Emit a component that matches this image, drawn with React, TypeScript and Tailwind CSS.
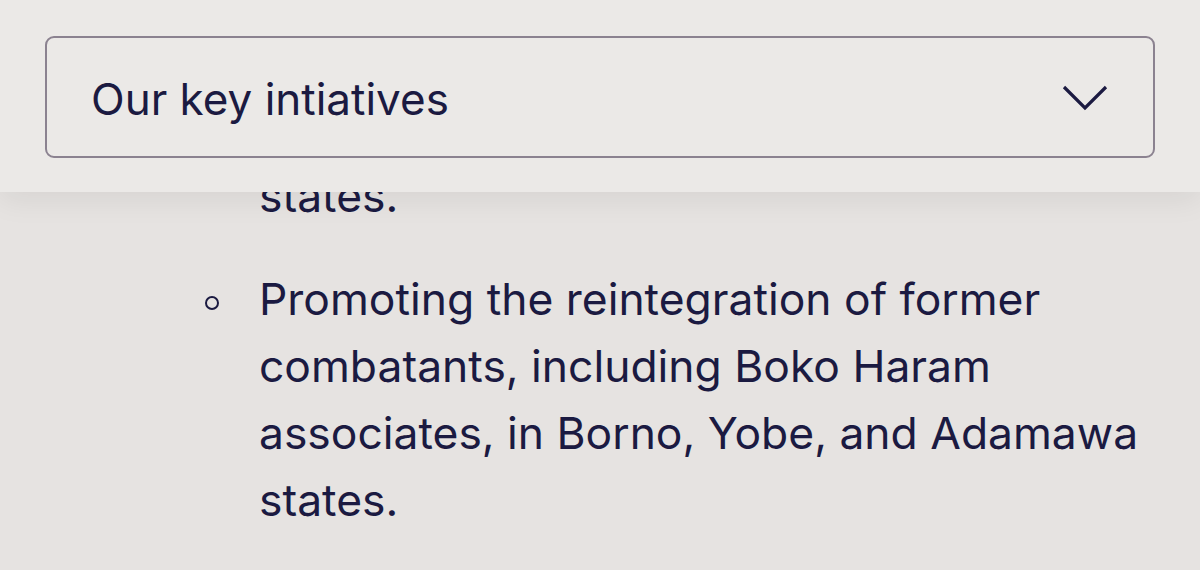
const items = [
  <>Supporting peacebuilding and reconciliation efforts in Borno, Yobe, and Adamawa<br />states.</>,
  <>Promoting the reintegration of former combatants, including Boko Haram associates, in Borno, Yobe, and Adamawa states.</>,
];

export default function App() {
  return (
    <div className="relative h-[570px] w-[1200px] overflow-hidden bg-[#e6e3e1] font-['Inter',sans-serif] text-[#1b1a41]">
      {/* sticky dropdown bar */}
      <div className="absolute inset-x-0 top-0 z-10 h-[192px] bg-[#ebe9e7] px-[45px] pt-[36px] shadow-[0_8px_28px_rgba(0,0,0,0.07)]">
        <button className="flex h-[122px] w-full items-center justify-between rounded-[9px] border-2 border-[#8b8290] pl-[44px] pr-[45px] text-left">
          <span className="pt-[4px] text-[44px] leading-none">Our key intiatives</span>
          <svg width="46" height="27" viewBox="0 0 46 27" fill="none" className="mt-[2px]">
            <polyline points="2,2 23,23 44,2" stroke="#1b1a41" strokeWidth="3.2" strokeLinecap="butt" strokeLinejoin="miter" />
          </svg>
        </button>
      </div>

      {/* list content behind */}
      <ul className="mt-[-38px] flex w-[1165px] flex-col gap-[36px] pl-[259px]">
        {items.map((t, i) => (
          <li key={i} className="relative text-[44.4px] leading-[67px]">
            <span className="absolute left-[-54px] top-[30px] h-[14px] w-[14px] rounded-full border-2 border-[#1b1a41]" />
            {t}
          </li>
        ))}
      </ul>
    </div>
  );
}
